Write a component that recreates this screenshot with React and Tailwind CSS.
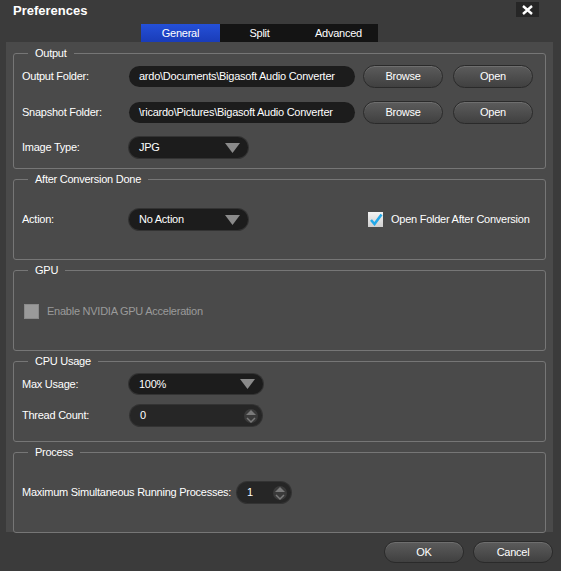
import React from "react";

const font = { fontFamily: '"Liberation Sans", Arial, sans-serif' };

function Btn({ children, className = "" }) {
  return (
    <div
      className={`flex items-center justify-center rounded-full border border-[#2a2a2a] bg-gradient-to-b from-[#5c5c5c] to-[#404040] text-[11px] text-white shadow-[inset_0_1px_0_rgba(255,255,255,0.12)] ${className}`}
    >
      {children}
    </div>
  );
}

function Group({ title, className = "", children }) {
  return (
    <div className={`relative rounded-[3px] border border-[#767676] ${className}`}>
      <div className="absolute left-[14px] top-[-8px] bg-[#4a4a4a] px-[7px] text-[11px] leading-[14px] text-white">
        {title}
      </div>
      {children}
    </div>
  );
}

function Dropdown({ value, className = "" }) {
  return (
    <div
      className={`flex items-center justify-between rounded-full bg-[#1c1c1c] pl-[10px] pr-[8px] text-[11px] text-white shadow-[0_0_0_1px_#333] ${className}`}
    >
      <span>{value}</span>
      <svg width="15" height="10" viewBox="0 0 15 10">
        <path d="M0 0 H15 L7.5 10 Z" fill="#8a8a8a" />
      </svg>
    </div>
  );
}

function Spinner({ value, className = "" }) {
  return (
    <div
      className={`flex items-center justify-between rounded-full bg-[#262626] pl-[10px] pr-[4px] text-[11px] text-white shadow-[0_0_0_1px_#333] ${className}`}
    >
      <span>{value}</span>
      <svg width="14" height="16" viewBox="0 0 14 16">
        <circle cx="7" cy="8" r="7" fill="#3a3a3a" />
        <path d="M2 7 L7 2 L12 7 Z" fill="#7a7a7a" />
        <path d="M3 10 L7 14 L11 10" fill="none" stroke="#7a7a7a" strokeWidth="1.5" />
      </svg>
    </div>
  );
}

function Label({ children, className = "" }) {
  return <div className={`whitespace-nowrap text-[11px] text-white ${className}`}>{children}</div>;
}

export default function App() {
  return (
    <div
      style={font}
      className="flex h-[571px] w-[561px] flex-col overflow-hidden bg-[#3b3b3b] tracking-[-0.25px] text-white"
    >
      {/* Title bar */}
      <div className="relative h-[24px] shrink-0">
        <div className="absolute left-[13px] top-[2px] text-[13px] font-bold leading-[17px] tracking-normal">
          Preferences
        </div>
        <div className="absolute left-[516px] top-[2px] flex h-[15px] w-[23px] items-center justify-center bg-[#262626]">
          <svg width="11" height="10" viewBox="0 0 11 10">
            <path d="M1 1 L10 9 M10 1 L1 9" stroke="#fff" strokeWidth="2.4" />
          </svg>
        </div>
      </div>
      {/* Tabs */}
      <div className="flex h-[18px] shrink-0 pl-[141px]">
        <div className="flex w-[237px] bg-[#141414] text-[11px]">
          <div className="flex w-[79px] items-center justify-center bg-gradient-to-b from-[#2450d8] to-[#1a3cb8]">
            General
          </div>
          <div className="flex w-[79px] items-center justify-center">Split</div>
          <div className="flex w-[79px] items-center justify-center">Advanced</div>
        </div>
      </div>
      {/* Panel */}
      <div className="ml-[6px] mr-[8px] flex h-[490px] shrink-0 flex-col gap-[10px] bg-[#4a4a4a] px-[7px] pt-[11px]">
        <Group title="Output" className="h-[116px] shrink-0">
          <div className="flex flex-col gap-[13px] pl-[8px] pt-[11px]">
            <div className="flex items-center">
              <Label className="w-[107px]">Output Folder:</Label>
              <div className="flex h-[21px] w-[226px] items-center overflow-hidden whitespace-nowrap rounded-full bg-[#1c1c1c] pl-[10px] text-[11px]">
                ardo\Documents\Bigasoft Audio Converter
              </div>
              <Btn className="ml-[8px] h-[23px] w-[80px]">Browse</Btn>
              <Btn className="ml-[10px] h-[23px] w-[80px]">Open</Btn>
            </div>
            <div className="flex items-center">
              <Label className="w-[107px]">Snapshot Folder:</Label>
              <div className="flex h-[21px] w-[226px] items-center overflow-hidden whitespace-nowrap rounded-full bg-[#1c1c1c] pl-[10px] text-[11px]">
                \ricardo\Pictures\Bigasoft Audio Converter
              </div>
              <Btn className="ml-[8px] h-[23px] w-[80px]">Browse</Btn>
              <Btn className="ml-[10px] h-[23px] w-[80px]">Open</Btn>
            </div>
            <div className="flex items-center">
              <Label className="w-[107px]">Image Type:</Label>
              <Dropdown value="JPG" className="h-[21px] w-[119px]" />
            </div>
          </div>
        </Group>

        <Group title="After Conversion Done" className="h-[81px] shrink-0">
          <div className="flex items-center pl-[8px] pt-[29px]">
            <Label className="w-[107px]">Action:</Label>
            <Dropdown value="No Action" className="h-[21px] w-[119px]" />
            <div className="ml-[120px] flex items-center gap-[8px]">
              <div className="flex h-[15px] w-[15px] items-center justify-center bg-gradient-to-b from-[#f4f4f4] to-[#cfcfcf]">
                <svg width="14" height="13" viewBox="0 0 14 13">
                  <path d="M2 7 L5.5 11 L12.5 1.5" fill="none" stroke="#22a8e8" strokeWidth="2.6" />
                </svg>
              </div>
              <Label>Open Folder After Conversion</Label>
            </div>
          </div>
        </Group>

        <Group title="GPU" className="h-[81px] shrink-0">
          <div className="flex items-center gap-[8px] pl-[10px] pt-[32px]">
            <div className="h-[15px] w-[15px] border border-[#8a8a8a] bg-[#9a9a9a]" />
            <div className="whitespace-nowrap text-[11px] text-[#9a9a9a]">Enable NVIDIA GPU Acceleration</div>
          </div>
        </Group>

        <Group title="CPU Usage" className="h-[81px] shrink-0">
          <div className="flex flex-col gap-[11px] pl-[8px] pt-[12px]">
            <div className="flex items-center">
              <Label className="w-[107px]">Max Usage:</Label>
              <Dropdown value="100%" className="h-[20px] w-[134px]" />
            </div>
            <div className="flex items-center">
              <Label className="w-[108px]">Thread Count:</Label>
              <Spinner value="0" className="h-[21px] w-[132px]" />
            </div>
          </div>
        </Group>

        <Group title="Process" className="h-[81px] shrink-0">
          <div className="flex items-center pl-[8px] pt-[29px]">
            <Label className="w-[215px]">Maximum Simultaneous Running Processes:</Label>
            <Spinner value="1" className="h-[21px] w-[54px]" />
          </div>
        </Group>
      </div>
      {/* Bottom buttons */}
      <div className="mr-[8px] flex justify-end gap-[9px] pt-[9px]">
        <Btn className="h-[22px] w-[80px]">OK</Btn>
        <Btn className="h-[22px] w-[80px]">Cancel</Btn>
      </div>
    </div>
  );
}
